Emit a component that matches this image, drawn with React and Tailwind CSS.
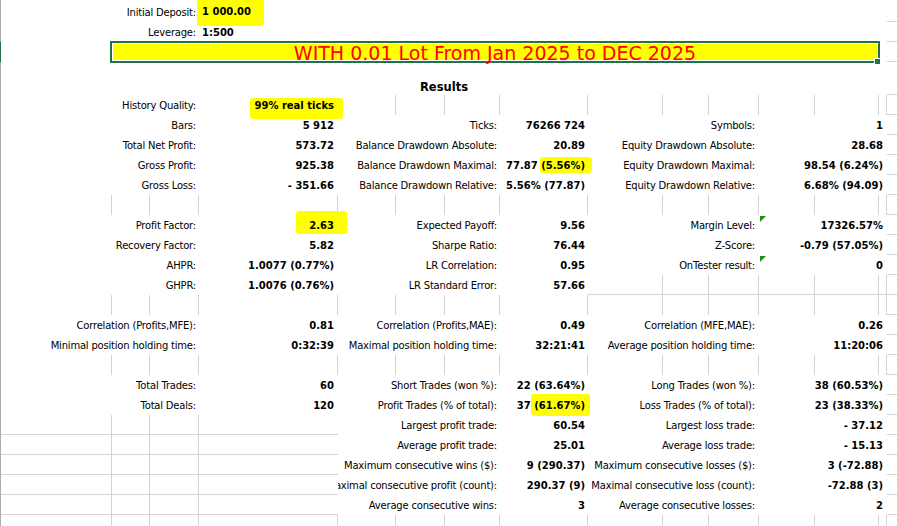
import clsx from "clsx";

// column widths between the sheet gridlines (first one loses 1px to the row header border)
const W = [
  "w-[111px]",
  "w-[38px]",
  "w-[49px]",
  "w-[139px]",
  "w-[58px]",
  "w-[49px]",
  "w-[55px]",
  "w-[88px]",
  "w-[75px]",
  "w-[46px]",
  "w-[50px]",
  "w-[56px]",
  "w-[64px]",
  "w-[8px]",
];

const Grid = ({ from, to, bottom = false, openEnd = false }) => {
  const cells = [];
  for (let i = from; i <= to; i++) {
    cells.push(
      <div
        key={i}
        className={clsx(
          "h-full shrink-0 border-[#d4d4d4]",
          W[i],
          !(openEnd && i === to) && "border-r",
          bottom && "border-b"
        )}
      />
    );
  }
  return cells;
};

const Edge = () => (
  <div className="h-full w-[10px] shrink-0 border-b border-[#d4d4d4]" />
);

const Row = ({ h = "h-[20px]", green, children }) => (
  <div
    className={clsx(
      "flex shrink-0 border-l",
      h,
      green ? "border-[#217346]" : "border-[#ababab]"
    )}
  >
    {children}
    <Edge />
  </div>
);

const Label = ({ w, pr, children }) => (
  <div
    className={clsx(
      "flex h-full shrink-0 items-center justify-end overflow-hidden whitespace-nowrap",
      w,
      pr
    )}
  >
    <span className="shrink-0 tracking-[-0.2px]">{children}</span>
  </div>
);

const Value = ({ w, pr, flag, children }) => (
  <div
    className={clsx(
      "relative flex h-full shrink-0 items-center justify-end whitespace-nowrap font-bold",
      w,
      pr
    )}
  >
    {flag && (
      <span className="absolute left-[1px] top-[1px] h-0 w-0 border-t-[6px] border-r-[6px] border-t-[#1e8c1e] border-r-transparent" />
    )}
    <span className="shrink-0">{children}</span>
  </div>
);

const Mark = ({ className, children }) => (
  <span className={clsx("rounded-[3px] bg-[#ffff00]", className)}>
    {children}
  </span>
);

const A = ({ label, value }) => (
  <>
    <Label w="w-[198px]" pr="pr-[3px]">
      {label}
    </Label>
    <Value w="w-[139px]" pr="pr-[4px]">
      {value}
    </Value>
  </>
);

const B = ({ label, value }) => (
  <>
    <Label w="w-[162px]" pr="pr-[3px]">
      {label}
    </Label>
    <Value w="w-[88px]" pr="pr-[3px]">
      {value}
    </Value>
  </>
);

const C = ({ label, value, flag }) => (
  <>
    <Label w="w-[171px]" pr="pr-[4px]">
      {label}
    </Label>
    <Value w="w-[128px]" pr="pr-[4px]" flag={flag}>
      {value}
    </Value>
  </>
);

const Empty = () => (
  <Row>
    <Grid from={0} to={13} />
  </Row>
);

export default function App() {
  return (
    <div className="flex h-[526px] w-[897px] flex-col overflow-hidden bg-white font-['DejaVu_Sans',sans-serif] text-[10px] leading-[13px] text-black">
      {/* header */}
      <Row h="h-[22px]">
        <div className="flex h-full w-[198px] shrink-0 items-center justify-end pr-[3px] pt-[2px]">
          <span className="tracking-[-0.2px]">Initial Deposit:</span>
        </div>
        <div className="flex h-full w-[139px] shrink-0 items-center pl-[3px] pt-[2px] font-bold">
          <Mark className="-ml-[5px] -mr-[13px] pb-[8px] pl-[5px] pr-[13px] pt-[6px]">
            1 000.00
          </Mark>
        </div>
        <div className="w-[549px] shrink-0" />
      </Row>
      <Row>
        <div className="flex h-full w-[198px] shrink-0 items-center justify-end pr-[3px]">
          <span className="tracking-[-0.2px]">Leverage:</span>
        </div>
        <div className="flex h-full w-[139px] shrink-0 items-center pl-[3px] font-bold">
          1:500
        </div>
        <div className="w-[549px] shrink-0" />
      </Row>
      <Row green>
        <div className="w-[109px] shrink-0" />
        <div className="relative -my-px h-[22px] w-[770px] shrink-0 border-2 border-[#217346] bg-white p-px">
          <div className="flex h-full items-center justify-center bg-[#ffff00] pt-[2px] text-[19px] leading-none text-[#ff0000]">
            WITH 0.01 Lot From Jan 2025 to DEC 2025
          </div>
          <div className="absolute -bottom-[4px] -right-[3px] h-[7px] w-[7px] border border-white bg-[#217346]" />
        </div>
        <div className="w-[7px] shrink-0" />
      </Row>
      <Row h="h-[33px]">
        <div className="flex h-full w-[886px] shrink-0 items-end justify-center pb-[1px] text-[11.5px] font-bold leading-[13px]">
          Results
        </div>
      </Row>

      {/* results table */}
      <Row>
        <A
          label="History Quality:"
          value={
            <Mark className="-ml-[4px] -mr-[9px] pb-[8px] pl-[4px] pr-[9px] pt-[2px]">
              99% real ticks
            </Mark>
          }
        />
        <Grid from={4} to={13} />
      </Row>
      <Row>
        <A label="Bars:" value="5 912" />
        <B label="Ticks:" value="76266 724" />
        <C label="Symbols:" value="1" />
      </Row>
      <Row>
        <A label="Total Net Profit:" value="573.72" />
        <B label="Balance Drawdown Absolute:" value="20.89" />
        <C label="Equity Drawdown Absolute:" value="28.68" />
      </Row>
      <Row>
        <A label="Gross Profit:" value="925.38" />
        <B
          label="Balance Drawdown Maximal:"
          value={
            <>
              77.87{" "}
              <Mark className="-ml-[1px] -mr-[7px] pb-[2px] pl-[1px] pr-[7px] pt-[3px]">
                (5.56%)
              </Mark>
            </>
          }
        />
        <C label="Equity Drawdown Maximal:" value="98.54 (6.24%)" />
      </Row>
      <Row>
        <A label="Gross Loss:" value="- 351.66" />
        <B label="Balance Drawdown Relative:" value="5.56% (77.87)" />
        <C label="Equity Drawdown Relative:" value="6.68% (94.09)" />
      </Row>
      <Empty />
      <Row>
        <A
          label="Profit Factor:"
          value={
            <Mark className="-ml-[13px] -mr-[13px] pb-[3px] pl-[13px] pr-[13px] pt-[9px]">
              2.63
            </Mark>
          }
        />
        <B label="Expected Payoff:" value="9.56" />
        <C label="Margin Level:" value="17326.57%" flag />
      </Row>
      <Row>
        <A label="Recovery Factor:" value="5.82" />
        <B label="Sharpe Ratio:" value="76.44" />
        <C label="Z-Score:" value="-0.79 (57.05%)" />
      </Row>
      <Row>
        <A label="AHPR:" value="1.0077 (0.77%)" />
        <B label="LR Correlation:" value="0.95" />
        <C label="OnTester result:" value="0" flag />
      </Row>
      <Row>
        <A label="GHPR:" value="1.0076 (0.76%)" />
        <B label="LR Standard Error:" value="57.66" />
        <Grid from={8} to={13} bottom />
      </Row>
      <Empty />
      <Row>
        <A label="Correlation (Profits,MFE):" value="0.81" />
        <B label="Correlation (Profits,MAE):" value="0.49" />
        <C label="Correlation (MFE,MAE):" value="0.26" />
      </Row>
      <Row>
        <A label="Minimal position holding time:" value="0:32:39" />
        <B label="Maximal position holding time:" value="32:21:41" />
        <C label="Average position holding time:" value="11:20:06" />
      </Row>
      <Empty />
      <Row>
        <A label="Total Trades:" value="60" />
        <B label="Short Trades (won %):" value="22 (63.64%)" />
        <C label="Long Trades (won %):" value="38 (60.53%)" />
      </Row>
      <Row>
        <A label="Total Deals:" value="120" />
        <B
          label="Profit Trades (% of total):"
          value={
            <>
              37{" "}
              <Mark className="-ml-[3px] -mr-[5px] pb-[5px] pl-[3px] pr-[5px] pt-[6px]">
                (61.67%)
              </Mark>
            </>
          }
        />
        <C label="Loss Trades (% of total):" value="23 (38.33%)" />
      </Row>
      <Row>
        <Grid from={0} to={3} bottom openEnd />
        <B label="Largest profit trade:" value="60.54" />
        <C label="Largest loss trade:" value="- 37.12" />
      </Row>
      <Row>
        <Grid from={0} to={3} bottom openEnd />
        <B label="Average profit trade:" value="25.01" />
        <C label="Average loss trade:" value="- 15.13" />
      </Row>
      <Row>
        <Grid from={0} to={3} bottom openEnd />
        <B label="Maximum consecutive wins ($):" value="9 (290.37)" />
        <C label="Maximum consecutive losses ($):" value="3 (-72.88)" />
      </Row>
      <Row>
        <Grid from={0} to={3} bottom openEnd />
        <B label="Maximal consecutive profit (count):" value="290.37 (9)" />
        <C label="Maximal consecutive loss (count):" value="-72.88 (3)" />
      </Row>
      <Row>
        <Grid from={0} to={3} bottom openEnd />
        <B label="Average consecutive wins:" value="3" />
        <C label="Average consecutive losses:" value="2" />
      </Row>
      <Empty />
    </div>
  );
}
